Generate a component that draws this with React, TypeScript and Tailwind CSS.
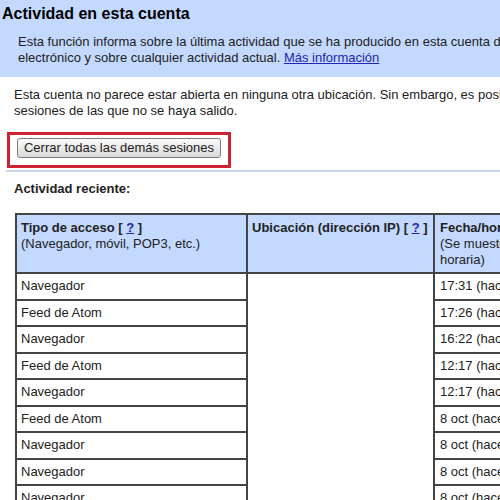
import React from 'react'

const rows = [
  { tipo: 'Navegador', fecha: '17:31 (hace 1 minuto)' },
  { tipo: 'Feed de Atom', fecha: '17:26 (hace 6 minutos)' },
  { tipo: 'Navegador', fecha: '16:22 (hace 1 hora)' },
  { tipo: 'Feed de Atom', fecha: '12:17 (hace 5 horas)' },
  { tipo: 'Navegador', fecha: '12:17 (hace 5 horas)' },
  { tipo: 'Feed de Atom', fecha: '8 oct (hace 1 día)' },
  { tipo: 'Navegador', fecha: '8 oct (hace 1 día)' },
  { tipo: 'Navegador', fecha: '8 oct (hace 1 día)' },
  { tipo: 'Navegador', fecha: '8 oct (hace 1 día)' },
]

function Help() {
  return (
    <>
      [ <a href="#" className="text-[#2424b0] underline">?</a> ]
    </>
  )
}

export default function App() {
  return (
    <div className="w-[500px] h-[500px] overflow-hidden bg-white font-['Liberation_Sans',Arial,sans-serif] text-[13px] text-[#222]">
      <div className="w-[760px]">
        {/* Header band */}
        <div className="bg-[#c3d9ff] h-[77px]">
          <h1 className="pt-[4px] pl-[2px] text-[16px] leading-[20px] font-bold text-black">
            Actividad en esta cuenta
          </h1>
          <p className="mt-[10px] pl-[18px] leading-[16px]">
            Esta función informa sobre la última actividad que se ha producido en esta cuenta de correo
            <br />
            electrónico y sobre cualquier actividad actual.{' '}
            <a href="#" className="text-[#2424b0] underline">Más información</a>
          </p>
        </div>

        <p className="mt-[10px] pl-[14px] leading-[16px]">
          Esta cuenta no parece estar abierta en ninguna otra ubicación. Sin embargo, es posible que haya
          <br />
          sesiones de las que no se haya salido.
        </p>

        {/* Sign out box */}
        <div className="mt-[13px] ml-[7px] w-[224px] h-[36px] border-[3px] border-[#cc2233] pl-[7px] pt-[3px]">
          <button className="w-[204px] h-[20px] rounded-[3px] border border-[#7b7b7b] bg-gradient-to-b from-[#fbfbfb] to-[#dadada] text-[13px] leading-[18px] text-[#222]">
            Cerrar todas las demás sesiones
          </button>
        </div>

        <div className="mt-[2px] ml-[6px] border-t-2 border-[#c8d6ea]" />

        <h2 className="mt-[9px] pl-[14px] leading-[16px] font-bold">Actividad reciente:</h2>

        {/* Activity table */}
        <table className="mt-[16px] ml-[15px] table-fixed border-collapse">
          <colgroup>
            <col className="w-[231px]" />
            <col className="w-[187px]" />
            <col className="w-[190px]" />
          </colgroup>
          <thead>
            <tr className="bg-[#c3d9ff]">
              <th className="h-[59px] border-2 border-[#444] align-top text-left font-normal pl-[4px] pt-[5px] leading-[16px]">
                <span className="font-bold">Tipo de acceso <Help /></span>
                <br />
                (Navegador, móvil, POP3, etc.)
              </th>
              <th className="border-2 border-[#444] align-top text-left font-normal pl-[4px] pt-[5px] leading-[16px]">
                <span className="font-bold">Ubicación (dirección IP) <Help /></span>
              </th>
              <th className="border-2 border-[#444] align-top text-left font-normal pl-[5px] pt-[5px] leading-[16px]">
                <span className="font-bold">Fecha/hora</span>
                <br />
                (Se muestra en tu zona
                <br />
                horaria)
              </th>
            </tr>
          </thead>
          <tbody>
            {rows.map((row, i) => (
              <tr key={i}>
                <td className="h-[26.5px] border-2 border-[#444] pl-[4px] leading-[16px]">{row.tipo}</td>
                {i === 0 && (
                  <td rowSpan={rows.length} className="border-2 border-[#444] bg-white" />
                )}
                <td className="border-2 border-[#444] pl-[5px] leading-[16px] whitespace-nowrap">{row.fecha}</td>
              </tr>
            ))}
          </tbody>
        </table>
      </div>
    </div>
  )
}
